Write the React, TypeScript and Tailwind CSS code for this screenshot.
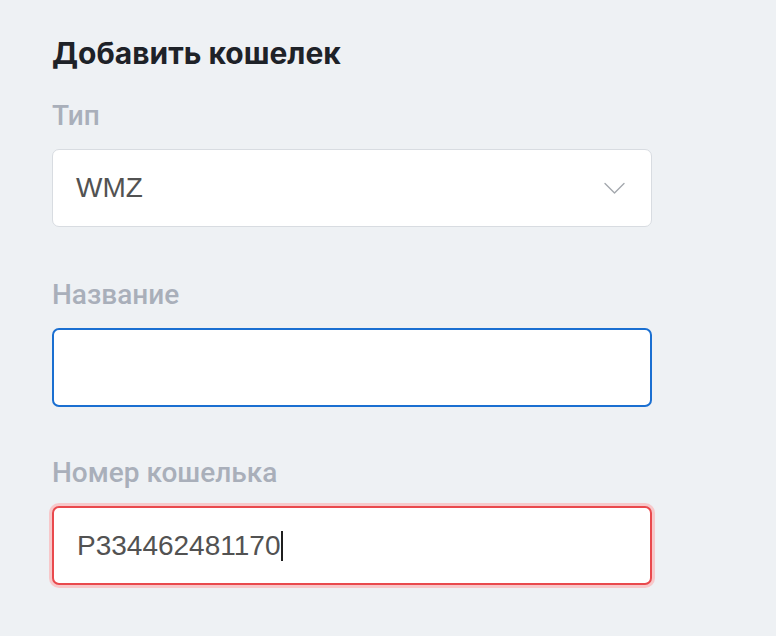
const Label = ({ children }: { children: string }) => (
    <div className="font-['Roboto',sans-serif] font-medium text-[28px] leading-[32px] text-[#a9afba]">
        {children}
    </div>
);

const App = () => {
    return (
        <div className="min-h-screen w-[776px] h-[636px] bg-[#eef1f4] pl-[52px] pt-[35px] overflow-hidden">
            {/* Title */}
            <h1 className="font-['Inter',sans-serif] font-bold text-[30px] leading-[36px] text-[#1e2228]">
                Добавить кошелек
            </h1>

            <div className="mt-[29px] w-[600px] flex flex-col">
                {/* Type select */}
                <Label>Тип</Label>
                <div className="mt-[17px] h-[78px] bg-white rounded-[7px] border-[1.5px] border-[#d8dce1] flex items-center justify-between pl-[23px] pr-[26px]">
                    <span className="font-['Liberation_Sans',sans-serif] text-[28px] text-[#525252]">WMZ</span>
                    <svg width="21" height="12" viewBox="0 0 21 12" fill="none">
                        <path d="M1 1.5l9.5 9.5L20 1.5" stroke="#a4a8ae" strokeWidth="1.4" strokeLinecap="round" strokeLinejoin="round" />
                    </svg>
                </div>

                {/* Name input, focused */}
                <div className="mt-[52px]">
                    <Label>Название</Label>
                </div>
                <div className="mt-[17px] h-[79px] bg-white rounded-[7px] border-2 border-[#1a6fd1]" />

                {/* Wallet number, invalid */}
                <div className="mt-[50px]">
                    <Label>Номер кошелька</Label>
                </div>
                <div className="mt-[17px] h-[79px] bg-white rounded-[7px] border-2 border-[#e9494d] ring-[3px] ring-[#f7c8ca] flex items-center pl-[23px]">
                    <span className="font-['Liberation_Sans',sans-serif] text-[28px] text-[#525252]">P334462481170</span>
                    <span className="inline-block w-[2px] h-[30px] bg-[#1f1f1f] ml-[1px]" />
                </div>
            </div>
        </div>
    );
};

export default App;
